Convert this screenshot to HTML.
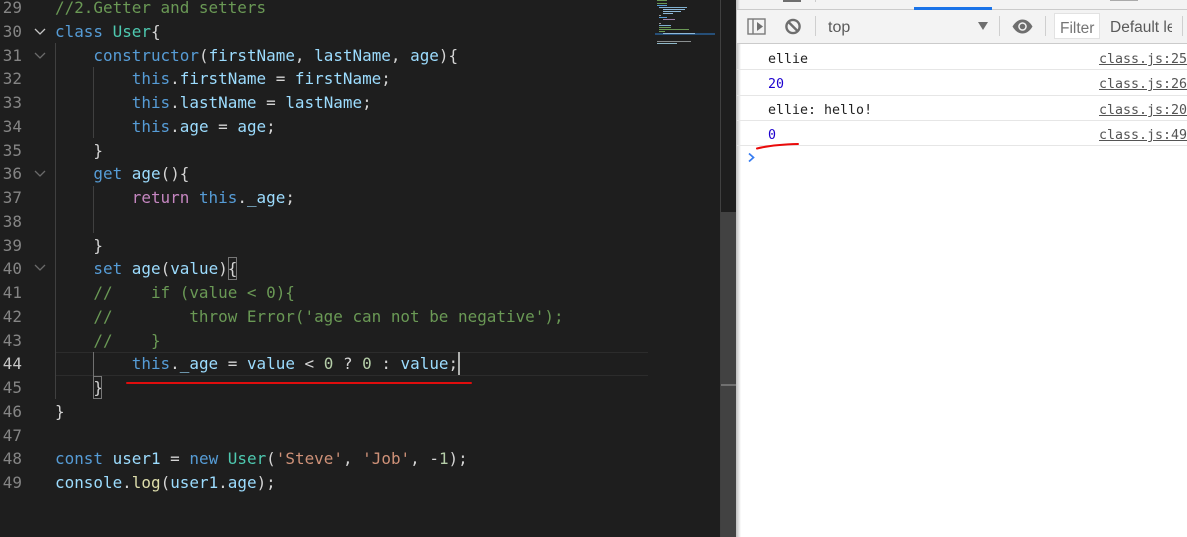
<!DOCTYPE html>
<html><head><meta charset="utf-8">
<style>
html,body{margin:0;padding:0;width:1187px;height:537px;overflow:hidden;background:#1e1e1e}
#p{position:relative;width:1187px;height:537px;overflow:hidden}
.l,.n{position:absolute;height:24px;margin-top:1px;font:15.95px/24px "DejaVu Sans Mono",monospace;white-space:pre}
.l{left:55px;color:#d4d4d4}
.n{left:0;width:22px;text-align:right;color:#858585}
.k{color:#569cd6}.v{color:#9cdcfe}.f{color:#dcdcaa}.t{color:#4ec9b0}.c{color:#6a9955}.s{color:#ce9178}.d{color:#b5cea8}.m{color:#c586c0}
.a{position:absolute}
.o{position:absolute;margin-top:1px;font:13.3px/16px "DejaVu Sans Mono",monospace;white-space:pre}
.u{position:absolute;margin-top:1px;left:1099px;font:13.3px/16px "DejaVu Sans Mono",monospace;color:#545454;text-decoration:underline;white-space:pre}
.h{position:absolute;left:737px;width:450px;height:1px;background:#e6e6e6}
.ui{position:absolute;margin-top:1px;font:14px/18px "Liberation Sans",sans-serif;color:#5a5a5a;white-space:pre}
</style></head><body><div id="p">

<div class="a" style="left:56px;top:352px;width:592px;height:22px;border-top:1px solid #2c2c2c;border-bottom:1px solid #2c2c2c"></div>

<div class="a" style="left:55px;top:43px;width:1px;height:356px;background:#404040"></div>
<div class="a" style="left:93px;top:67px;width:1px;height:71px;background:#404040"></div>
<div class="a" style="left:93px;top:186px;width:1px;height:47px;background:#404040"></div>
<div class="a" style="left:93px;top:352px;width:1px;height:24px;background:#707070"></div>

<div class="n" style="top:-5px">29</div><div class="l c" style="top:-5px">//2.Getter and setters</div>
<div class="n" style="top:19px">30</div><div class="l" style="top:19px"><span class="k">class</span> <span class="t">User</span>{</div>
<div class="n" style="top:43px">31</div><div class="l" style="top:43px">    <span class="k">constructor</span>(<span class="v">firstName</span>, <span class="v">lastName</span>, <span class="v">age</span>){</div>
<div class="n" style="top:66px">32</div><div class="l" style="top:66px">        <span class="k">this</span>.<span class="v">firstName</span> = <span class="v">firstName</span>;</div>
<div class="n" style="top:90px">33</div><div class="l" style="top:90px">        <span class="k">this</span>.<span class="v">lastName</span> = <span class="v">lastName</span>;</div>
<div class="n" style="top:114px">34</div><div class="l" style="top:114px">        <span class="k">this</span>.<span class="v">age</span> = <span class="v">age</span>;</div>
<div class="n" style="top:138px">35</div><div class="l" style="top:138px">    }</div>
<div class="n" style="top:161px">36</div><div class="l" style="top:161px">    <span class="k">get</span> <span class="v">age</span>(){</div>
<div class="n" style="top:185px">37</div><div class="l" style="top:185px">        <span class="m">return</span> <span class="k">this</span>.<span class="v">_age</span>;</div>
<div class="n" style="top:209px">38</div>
<div class="n" style="top:233px">39</div><div class="l" style="top:233px">    }</div>
<div class="n" style="top:256px">40</div><div class="l" style="top:256px">    <span class="k">set</span> <span class="v">age</span>(<span class="v">value</span>){</div>
<div class="n" style="top:280px">41</div><div class="l c" style="top:280px">    //    if (value &lt; 0){</div>
<div class="n" style="top:304px">42</div><div class="l c" style="top:304px">    //        throw Error('age can not be negative');</div>
<div class="n" style="top:328px">43</div><div class="l c" style="top:328px">    //    }</div>
<div class="n" style="top:351px;color:#c6c6c6">44</div><div class="l" style="top:351px">        <span class="k">this</span>.<span class="v">_age</span> = <span class="v">value</span> &lt; <span class="d">0</span> ? <span class="d">0</span> : <span class="v">value</span>;</div>
<div class="n" style="top:375px">45</div><div class="l" style="top:375px">    }</div>
<div class="n" style="top:399px">46</div><div class="l" style="top:399px">}</div>
<div class="n" style="top:423px">47</div>
<div class="n" style="top:446px">48</div><div class="l" style="top:446px"><span class="k">const</span> <span class="v">user1</span> = <span class="k">new</span> <span class="t">User</span>(<span class="s">'Steve'</span>, <span class="s">'Job'</span>, -<span class="d">1</span>);</div>
<div class="n" style="top:470px">49</div><div class="l" style="top:470px"><span class="v">console</span>.<span class="f">log</span>(<span class="v">user1</span>.<span class="v">age</span>);</div>

<!-- cursor and bracket match -->
<div class="a" style="left:458px;top:352px;width:2px;height:23px;background:#aeafad"></div>
<div class="a" style="left:93px;top:376px;width:7px;height:21px;border:1px solid #777"></div>
<div class="a" style="left:228px;top:257px;width:7px;height:21px;border:1px solid #777"></div>

<!-- fold chevrons -->
<svg class="a" style="left:30px;top:20px" width="20" height="170" fill="none" stroke-width="1.3">
<path d="M5 9l5 5 5-5" stroke="#c5c5c5"/>
<path d="M5 33l5 5 5-5" stroke="#6a6a6a"/>
<path d="M5 151l5 5 5-5" stroke="#6a6a6a"/>
</svg>
<svg class="a" style="left:30px;top:260px" width="20" height="20" fill="none" stroke-width="1.3"><path d="M5 5l5 5 5-5" stroke="#6a6a6a"/></svg>

<!-- red underline annotation -->
<div class="a" style="left:126px;top:382px;width:346px;height:2px;background:#e00d0d;border-radius:1px"></div>

<!-- minimap -->
<svg class="a" style="left:655px;top:0" width="62" height="48" shape-rendering="crispEdges">
<rect x="0" y="33" width="60" height="2" fill="#264f78"/>
<rect x="2" y="0" width="10" height="1" fill="#6a9955"/>
<rect x="2" y="3" width="10" height="1" fill="#6a9955"/>
<rect x="2" y="5" width="10" height="1" fill="#569cd6"/>
<rect x="4" y="7" width="28" height="1" fill="#7fb0d0"/>
<rect x="8" y="9" width="22" height="1" fill="#8fb8d8"/>
<rect x="8" y="11" width="18" height="1" fill="#8fb8d8"/>
<rect x="8" y="13" width="10" height="1" fill="#8fb8d8"/>
<rect x="4" y="15" width="2" height="1" fill="#999"/>
<rect x="4" y="17" width="8" height="1" fill="#569cd6"/>
<rect x="8" y="19" width="12" height="1" fill="#9a7fa8"/>
<rect x="4" y="23" width="2" height="1" fill="#999"/>
<rect x="4" y="25" width="12" height="1" fill="#7fb0d0"/>
<rect x="4" y="27" width="12" height="1" fill="#6a9955"/>
<rect x="4" y="29" width="30" height="1" fill="#6a9955"/>
<rect x="4" y="31" width="6" height="1" fill="#6a9955"/>
<rect x="8" y="33" width="32" height="1" fill="#8fb8d8"/>
<rect x="2" y="41" width="34" height="1" fill="#8a8f90"/>
<rect x="2" y="43" width="20" height="1" fill="#8fb8c8"/>
</svg>

<!-- scrollbar -->
<div class="a" style="left:720px;top:0;width:1px;height:537px;background:#404040"></div>
<div class="a" style="left:721px;top:212px;width:15px;height:325px;background:#424242"></div>
<div class="a" style="left:721px;top:384px;width:15px;height:2px;background:#707070"></div>

<!-- devtools -->
<div class="a" style="left:736px;top:0;width:451px;height:537px;background:#fff"></div>
<div class="a" style="left:736px;top:0;width:5px;height:537px;background:linear-gradient(90deg,#bdbdbd,#fff)"></div>
<div class="a" style="left:740px;top:0;width:447px;height:9px;background:#f3f3f3"></div>
<div class="a" style="left:737px;top:9px;width:450px;height:1px;background:#cbcbcb"></div>
<div class="a" style="left:914px;top:7px;width:78px;height:3px;background:#1a73e8"></div>
<div class="a" style="left:737px;top:10px;width:450px;height:33px;background:#f3f3f3;border-bottom:1px solid #cbcbcb"></div>
<div class="a" style="left:783px;top:0;width:18px;height:2px;background:#6e6e6e"></div>
<div class="a" style="left:815px;top:0;width:1px;height:2px;background:#ccc"></div>
<div class="a" style="left:1110px;top:0;width:28px;height:1px;background:#aaa"></div>

<svg class="a" style="left:737px;top:10px" width="450" height="33">
<rect x="11" y="9" width="17" height="15" fill="none" stroke="#7a7a7a" stroke-width="1.4"/>
<line x1="16" y1="9" x2="16" y2="24" stroke="#7a7a7a" stroke-width="1.4"/>
<path d="M20 12l6 4.500-6 4.500z" fill="#6e6e6e"/>
<circle cx="56" cy="16.500" r="6.600" fill="none" stroke="#6e6e6e" stroke-width="2.400"/>
<line x1="51.500" y1="12" x2="60.500" y2="21" stroke="#6e6e6e" stroke-width="2.400"/>
<rect x="78" y="6" width="1" height="20" fill="#cfcfcf"/>
<path d="M241 12h10l-5 8z" fill="#6e6e6e"/>
<rect x="262" y="6" width="1" height="20" fill="#cfcfcf"/>
<path d="M275.500 16.500c3-5 6.500-7 10-7s7 2 10 7c-3 5-6.500 7-10 7s-7-2-10-7z" fill="#6e6e6e"/>
<circle cx="285.500" cy="16.500" r="4.300" fill="#f3f3f3"/>
<circle cx="285.500" cy="16.500" r="2.800" fill="#6e6e6e"/>
<rect x="308" y="6" width="1" height="20" fill="#cfcfcf"/>
<rect x="317.500" y="3.500" width="45" height="25" fill="#fff" stroke="#e2e2e2"/>
<rect x="445" y="6" width="1" height="20" fill="#cfcfcf"/>
</svg>
<div class="ui" style="left:828px;top:18px;font-size:16px">top</div>
<div class="ui" style="left:1060px;top:19px;font-size:15.500px;color:#757575">Filter</div>
<div class="ui" style="left:1110px;top:18px;font-size:15.500px;width:62px;overflow:hidden">Default levels</div>

<div class="o" style="left:768px;top:51px;color:#222">ellie</div><div class="u" style="top:51px">class.js:25</div>
<div class="h" style="top:69px"></div>
<div class="o" style="left:768px;top:76px;color:#1c00cf">20</div><div class="u" style="top:76px">class.js:26</div>
<div class="h" style="top:95px"></div>
<div class="o" style="left:768px;top:102px;color:#222">ellie: hello!</div><div class="u" style="top:102px">class.js:20</div>
<div class="h" style="top:120px"></div>
<div class="o" style="left:768px;top:127px;color:#1c00cf">0</div><div class="u" style="top:127px">class.js:49</div>
<div class="h" style="top:145px"></div>

<svg class="a" style="left:750px;top:140px" width="55" height="10" fill="none"><path d="M7 8.500C15 6.500 26 4.500 48 4" stroke="#ea0a0a" stroke-width="2" stroke-linecap="round"/></svg>
<svg class="a" style="left:747px;top:152px" width="10" height="11" fill="none"><path d="M2 1.500l4.500 4-4.500 4" stroke="#367cf1" stroke-width="1.700"/></svg>

</div></body></html>
